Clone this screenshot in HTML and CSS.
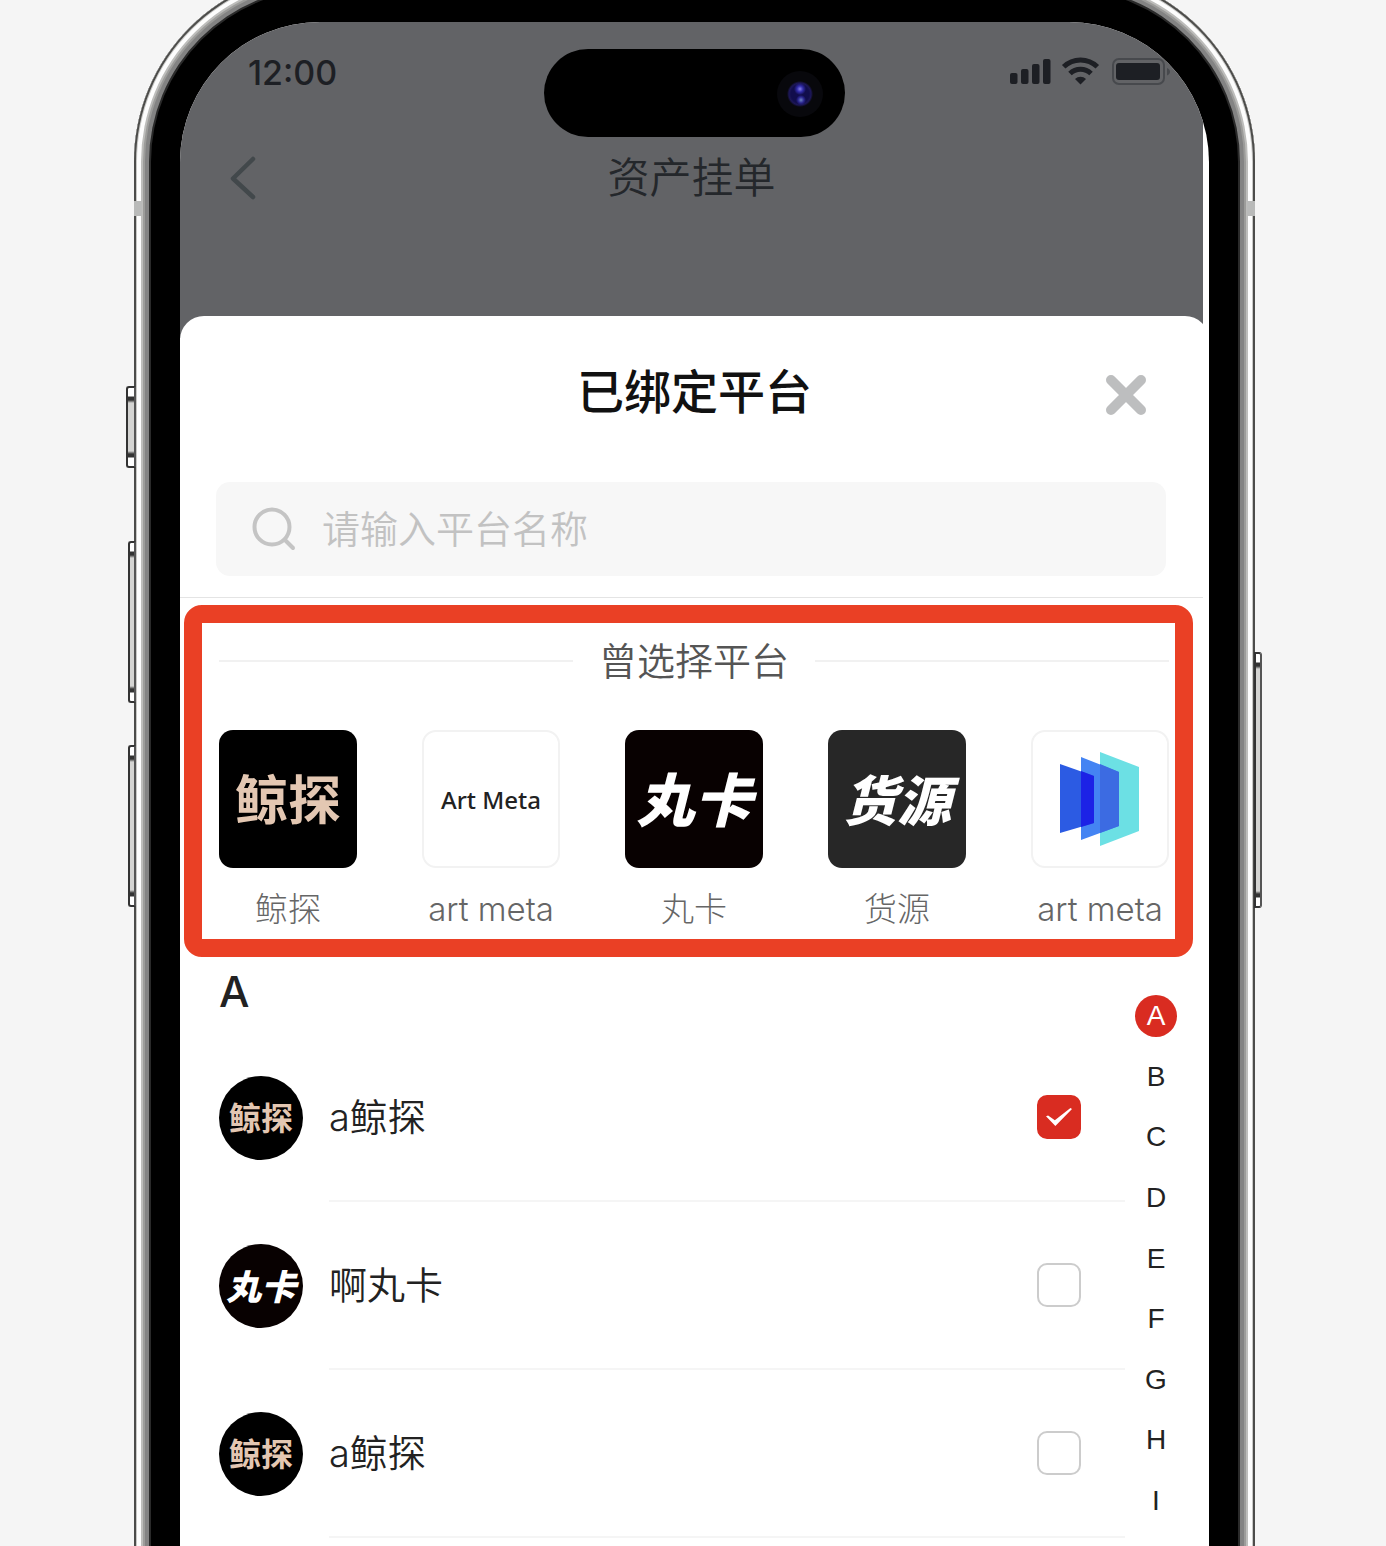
FILE: index.html
```html
<!DOCTYPE html>
<html lang="zh-CN">
<head>
<meta charset="utf-8">
<meta name="viewport" content="width=device-width, initial-scale=1">
<title>已绑定平台</title>
<link rel="stylesheet" href="styles.css">
</head>
<body>
<div class="stage">
  <div class="phone">
    <span class="side-key side-key-action"></span>
    <span class="side-key side-key-up"></span>
    <span class="side-key side-key-down"></span>
    <span class="side-key side-key-power"></span>
    <span class="antenna antenna-left"></span>
    <span class="antenna antenna-right"></span>
    <div class="screen">
      <header class="backdrop">
        <div class="status-bar">
          <time class="clock">12:00</time>
          <svg class="status-icons" width="162" height="30" viewBox="0 0 162 30" aria-hidden="true">
            <g fill="#1d1f24">
              <rect x="0" y="16" width="7.500" height="11" rx="2"/>
              <rect x="11" y="12" width="7.500" height="15" rx="2"/>
              <rect x="22" y="7" width="7.500" height="20" rx="2"/>
              <rect x="33" y="2" width="7.500" height="25" rx="2"/>
              <rect x="106" y="6" width="44" height="17" rx="3"/>
              <path d="M70.500 27.500l-5.500-5.500a8 8 0 0 1 11 0z"/>
            </g>
            <g fill="none" stroke="#1d1f24" stroke-width="5">
              <path d="M53.700 9.800a24 24 0 0 1 33.600 0"/>
              <path d="M60 16.500a15 15 0 0 1 21 0"/>
            </g>
            <rect x="103" y="2" width="51" height="25" rx="6" fill="none" stroke="#47494d" stroke-width="2"/>
            <path d="M157 11c4 1.500 4 6 0 7.500z" fill="#47494d"/>
          </svg>
        </div>
        <div class="nav-bar">
          <button class="back" type="button" aria-label="返回">
            <svg width="28" height="46" viewBox="0 0 28 46"><path d="M24 4L4 23.500L24 42" fill="none" stroke="#42484b" stroke-width="4.500" stroke-linecap="round" stroke-linejoin="round"/></svg>
          </button>
          <h1 class="page-title">资产挂单</h1>
        </div>
      </header>
      <div class="island"><span class="camera"></span></div>

      <main class="sheet">
        <div class="sheet-head">
          <h2 class="sheet-title">已绑定平台</h2>
          <button class="close" type="button" aria-label="关闭">
            <svg width="42" height="42" viewBox="0 0 42 42"><path d="M6 6L36 36M36 6L6 36" stroke="#bdbebf" stroke-width="10" stroke-linecap="round"/></svg>
          </button>
        </div>
        <label class="search">
          <svg width="46" height="46" viewBox="0 0 46 46" fill="none" stroke="#c4c4c4" stroke-width="4" stroke-linecap="round" aria-hidden="true"><circle cx="20" cy="21" r="17.500"/><path d="M33 34l8 8"/></svg>
          <input class="search-input" type="text" placeholder="请输入平台名称" aria-label="请输入平台名称">
        </label>

        <section class="recent">
          <h3 class="recent-title">曾选择平台</h3>
          <ul class="tiles">
            <li class="tile"><span class="logo logo-whale">鲸探</span><span class="tile-name">鲸探</span></li>
            <li class="tile"><span class="logo logo-art">Art Meta</span><span class="tile-name">art meta</span></li>
            <li class="tile"><span class="logo logo-wan">丸卡</span><span class="tile-name">丸卡</span></li>
            <li class="tile"><span class="logo logo-source">货源</span><span class="tile-name">货源</span></li>
            <li class="tile"><span class="logo logo-panels">
              <svg width="80" height="94" viewBox="0 0 80 94" aria-hidden="true">
                <path d="M40 0L79 15V79L40 94z" fill="#6ce0e4"/>
                <path d="M21 5L59 20V74L21 88z" fill="#4484f3"/>
                <path d="M40 12L59 20V74L40 81z" fill="#3c6be2"/>
                <path d="M0 12L34 24V71L0 81z" fill="#2c5be3"/>
                <path d="M21 19L34 24V71L21 75z" fill="#1c22e6"/>
              </svg></span><span class="tile-name">art meta</span></li>
          </ul>
        </section>

        <div class="directory">
          <section class="group">
            <h3 class="letter">A</h3>
            <label class="row"><span class="avatar avatar-whale">鲸探</span><span class="row-body"><span class="row-name">a鲸探</span><input class="tick" type="checkbox" checked></span></label>
            <label class="row"><span class="avatar avatar-wan">丸卡</span><span class="row-body"><span class="row-name">啊丸卡</span><input class="tick" type="checkbox"></span></label>
            <label class="row"><span class="avatar avatar-whale">鲸探</span><span class="row-body"><span class="row-name">a鲸探</span><input class="tick" type="checkbox"></span></label>
          </section>
          <nav class="index" aria-label="字母索引">
            <a class="index-link current" href="#a">A</a>
            <a class="index-link" href="#b">B</a>
            <a class="index-link" href="#c">C</a>
            <a class="index-link" href="#d">D</a>
            <a class="index-link" href="#e">E</a>
            <a class="index-link" href="#f">F</a>
            <a class="index-link" href="#g">G</a>
            <a class="index-link" href="#h">H</a>
            <a class="index-link" href="#i">I</a>
          </nav>
        </div>
      </main>
    </div>
  </div>
</div>
</body>
</html>
```
FILE: styles.css
```css
* { box-sizing: border-box; }

body {
  margin: 0;
  background: #f5f5f5;
  color: #222;
  font-family: Inter, "Noto Sans CJK SC", sans-serif;
}

h1, h2, h3, ul { margin: 0; padding: 0; font-weight: 400; }
ul { list-style: none; }
button { padding: 0; border: 0; background: none; cursor: pointer; }
svg { display: block; }

.stage { overflow: hidden; padding: 0 131px 0 134px; }

/* Device frame: metal rim drawn as nested rings around the black bezel.
   Top and bottom edges run past the stage and are clipped by it. */
.phone {
  position: relative;
  margin: -28px 0 -24px;
  padding: 50px 46px 24px;
  border-radius: 190px 190px 0 0;
  background: #000;
  box-shadow:
    inset 0 0 0 2px #4c4c4a,
    inset 0 0 0 3px #c8c8c6,
    inset 0 0 0 7px #fdfdfd,
    inset 0 0 0 9px #bdbdbb,
    inset 0 0 0 11px #9c9c9a,
    inset 0 0 0 15px #838383,
    inset 0 0 0 17px #2a2a2a;
}

.side-key {
  position: absolute;
  left: -6px;
  width: 8px;
  height: 162px;
  border: 2px solid #333;
  border-right-color: #555;
  border-radius: 3px 0 0 3px;
  background: linear-gradient(#fff 8px, #333 9px, #333 12px, #d4d4d2 15px, #d4d4d2 calc(100% - 15px), #333 calc(100% - 12px), #333 calc(100% - 9px), #fff calc(100% - 8px));
}
.side-key-action { top: 414px; left: -8px; width: 10px; height: 82px; }
.side-key-up { top: 569px; }
.side-key-down { top: 773px; }
.side-key-power {
  top: 680px;
  right: -7px;
  left: auto;
  height: 256px;
  border-radius: 0 3px 3px 0;
}

.antenna { position: absolute; top: 229px; width: 8px; height: 15px; background: #b9bab9; }
.antenna-left { left: 0; }
.antenna-right { right: 0; }

.screen {
  position: relative;
  overflow: hidden;
  border-radius: 140px 140px 0 0;
  background: #fff;
}

.backdrop {
  margin-right: 6px;
  padding-bottom: 104px;
  background: #626366;
}
.status-bar {
  display: flex;
  align-items: center;
  justify-content: space-between;
  height: 100px;
  padding: 0 31px 0 68px;
}
.clock { color: #1d1f24; font-size: 34px; font-weight: 500; }
.nav-bar {
  display: grid;
  grid-template-columns: 80px 1fr 80px;
  align-items: center;
  height: 112px;
}
.back { display: flex; justify-content: flex-end; width: 77px; }
.page-title {
  padding-bottom: 8px;
  color: #24272b;
  font-size: 42px;
  font-weight: 350;
  text-align: center;
}

.island {
  position: absolute;
  top: 27px;
  left: calc(50% - 151px);
  width: 301px;
  height: 88px;
  border-radius: 44px;
  background: #000;
}
.camera {
  position: absolute;
  top: 22px;
  right: 22px;
  width: 46px;
  height: 46px;
  border-radius: 50%;
  background:
    radial-gradient(circle at 23px 18px, #8581e6 0, #322caa 3px, transparent 6px),
    radial-gradient(circle at 24px 29px, #6c83c2 0, #2a258f 3px, transparent 5px),
    radial-gradient(circle at 23px 23px, #110d4c 9px, #1d1757 11px, #08080c 13px);
}

.sheet {
  position: relative;
  margin-top: -22px;
  border-radius: 24px 24px 0 0;
  background: #fff;
}
.sheet-head {
  display: grid;
  grid-template-columns: 104px 1fr 104px;
  align-items: center;
  height: 158px;
}
.sheet-title {
  grid-column: 2;
  padding-bottom: 14px;
  color: #111;
  font-size: 47px;
  font-weight: 500;
  text-align: center;
}
.close { display: flex; width: 42px; justify-content: center; }

.search {
  display: flex;
  align-items: center;
  gap: 24px;
  height: 94px;
  margin: 8px 43px 0 36px;
  padding: 0 36px;
  border-radius: 14px;
  background: #f7f7f7;
}
.search-input {
  flex: 1;
  min-width: 0;
  padding: 0;
  border: 0;
  outline: 0;
  background: none;
  color: #222;
  font: 350 38px/56px Inter, "Noto Sans CJK SC", sans-serif;
}
.search-input::placeholder { color: #c2c2c2; opacity: 1; }

.recent {
  position: relative;
  margin: 29px 16px 0 4px;
  padding: 10px 6px 7px 17px;
  border: 18px solid #ea4025;
  border-radius: 18px;
}
/* Hairline that closes the search area */
.recent::before {
  content: "";
  position: absolute;
  top: -26px;
  right: -28px;
  left: -22px;
  height: 1px;
  background: #e4e4e4;
}
.recent-title {
  display: flex;
  align-items: center;
  gap: 26px;
  color: #555;
  font-size: 38px;
  font-weight: 350;
  line-height: 56px;
}
.recent-title::before,
.recent-title::after { content: ""; flex: 1; height: 2px; background: #f1f1f1; }
.tiles { display: flex; justify-content: space-between; margin-top: 41px; }
.tile { display: flex; flex-direction: column; align-items: center; width: 138px; }
.logo {
  display: flex;
  align-items: center;
  justify-content: center;
  width: 138px;
  height: 138px;
  padding-bottom: 4px;
  border-radius: 14px;
  color: #fff;
  white-space: nowrap;
}
.logo-whale { background: #000; color: #e3c7b2; font-size: 53px; font-weight: 700; }
.logo-art {
  padding: 0;
  border: 2px solid #f2f2f2;
  color: #222;
  font-family: "Noto Sans", sans-serif;
  font-size: 24px;
  font-weight: 500;
}
.logo-wan { background: #080101; font-size: 58px; font-style: italic; font-weight: 900; }
.logo-source { background: #272727; font-size: 54px; font-style: italic; font-weight: 900; }
.logo-panels { padding: 0; border: 2px solid #f2f2f2; }
.tile-name {
  margin-top: 18px;
  color: #666;
  font-size: 33px;
  font-weight: 300;
  line-height: 46px;
  white-space: nowrap;
}

.directory {
  display: flex;
  gap: 10px;
  padding: 0 32px 8px 39px;
}
.group { flex: 1; }
.letter { height: 77px; font-size: 43px; font-weight: 500; line-height: 68px; }
.row { display: flex; align-items: center; gap: 26px; height: 168px; }
.avatar {
  display: flex;
  align-items: center;
  justify-content: center;
  width: 84px;
  height: 84px;
  padding-bottom: 4px;
  border-radius: 50%;
  background: #000;
  color: #fff;
  white-space: nowrap;
}
.avatar-whale { color: #e3c7b2; font-size: 32px; font-weight: 700; }
.avatar-wan { background: #080101; font-size: 35px; font-style: italic; font-weight: 900; }
.row-body {
  display: flex;
  flex: 1;
  align-items: center;
  justify-content: space-between;
  height: 100%;
  padding-right: 44px;
  border-bottom: 2px solid #f5f5f5;
}
.row-name { padding-bottom: 6px; font-size: 38px; font-weight: 350; }
.tick {
  display: grid;
  place-items: center;
  width: 44px;
  height: 44px;
  margin: 0;
  border: 2px solid #ccc;
  border-radius: 10px;
  background: #fff;
  appearance: none;
}
.tick:checked { border-color: #d92c21; background: #d92c21; }
.tick:checked::before {
  content: "";
  width: 26px;
  height: 18px;
  background: #fff;
  clip-path: polygon(0 46%, 8% 42%, 34% 68%, 94% 0, 100% 6%, 36% 100%);
}

.index {
  display: flex;
  flex-direction: column;
  align-items: center;
  justify-content: space-between;
  width: 42px;
  padding: 38px 0 16px;
}
.index-link {
  width: 42px;
  height: 42px;
  border-radius: 50%;
  color: #222;
  font-family: "Liberation Sans", sans-serif;
  font-size: 28px;
  line-height: 42px;
  text-align: center;
  text-decoration: none;
}
.current { background: #d92c21; color: #fff; }
```
